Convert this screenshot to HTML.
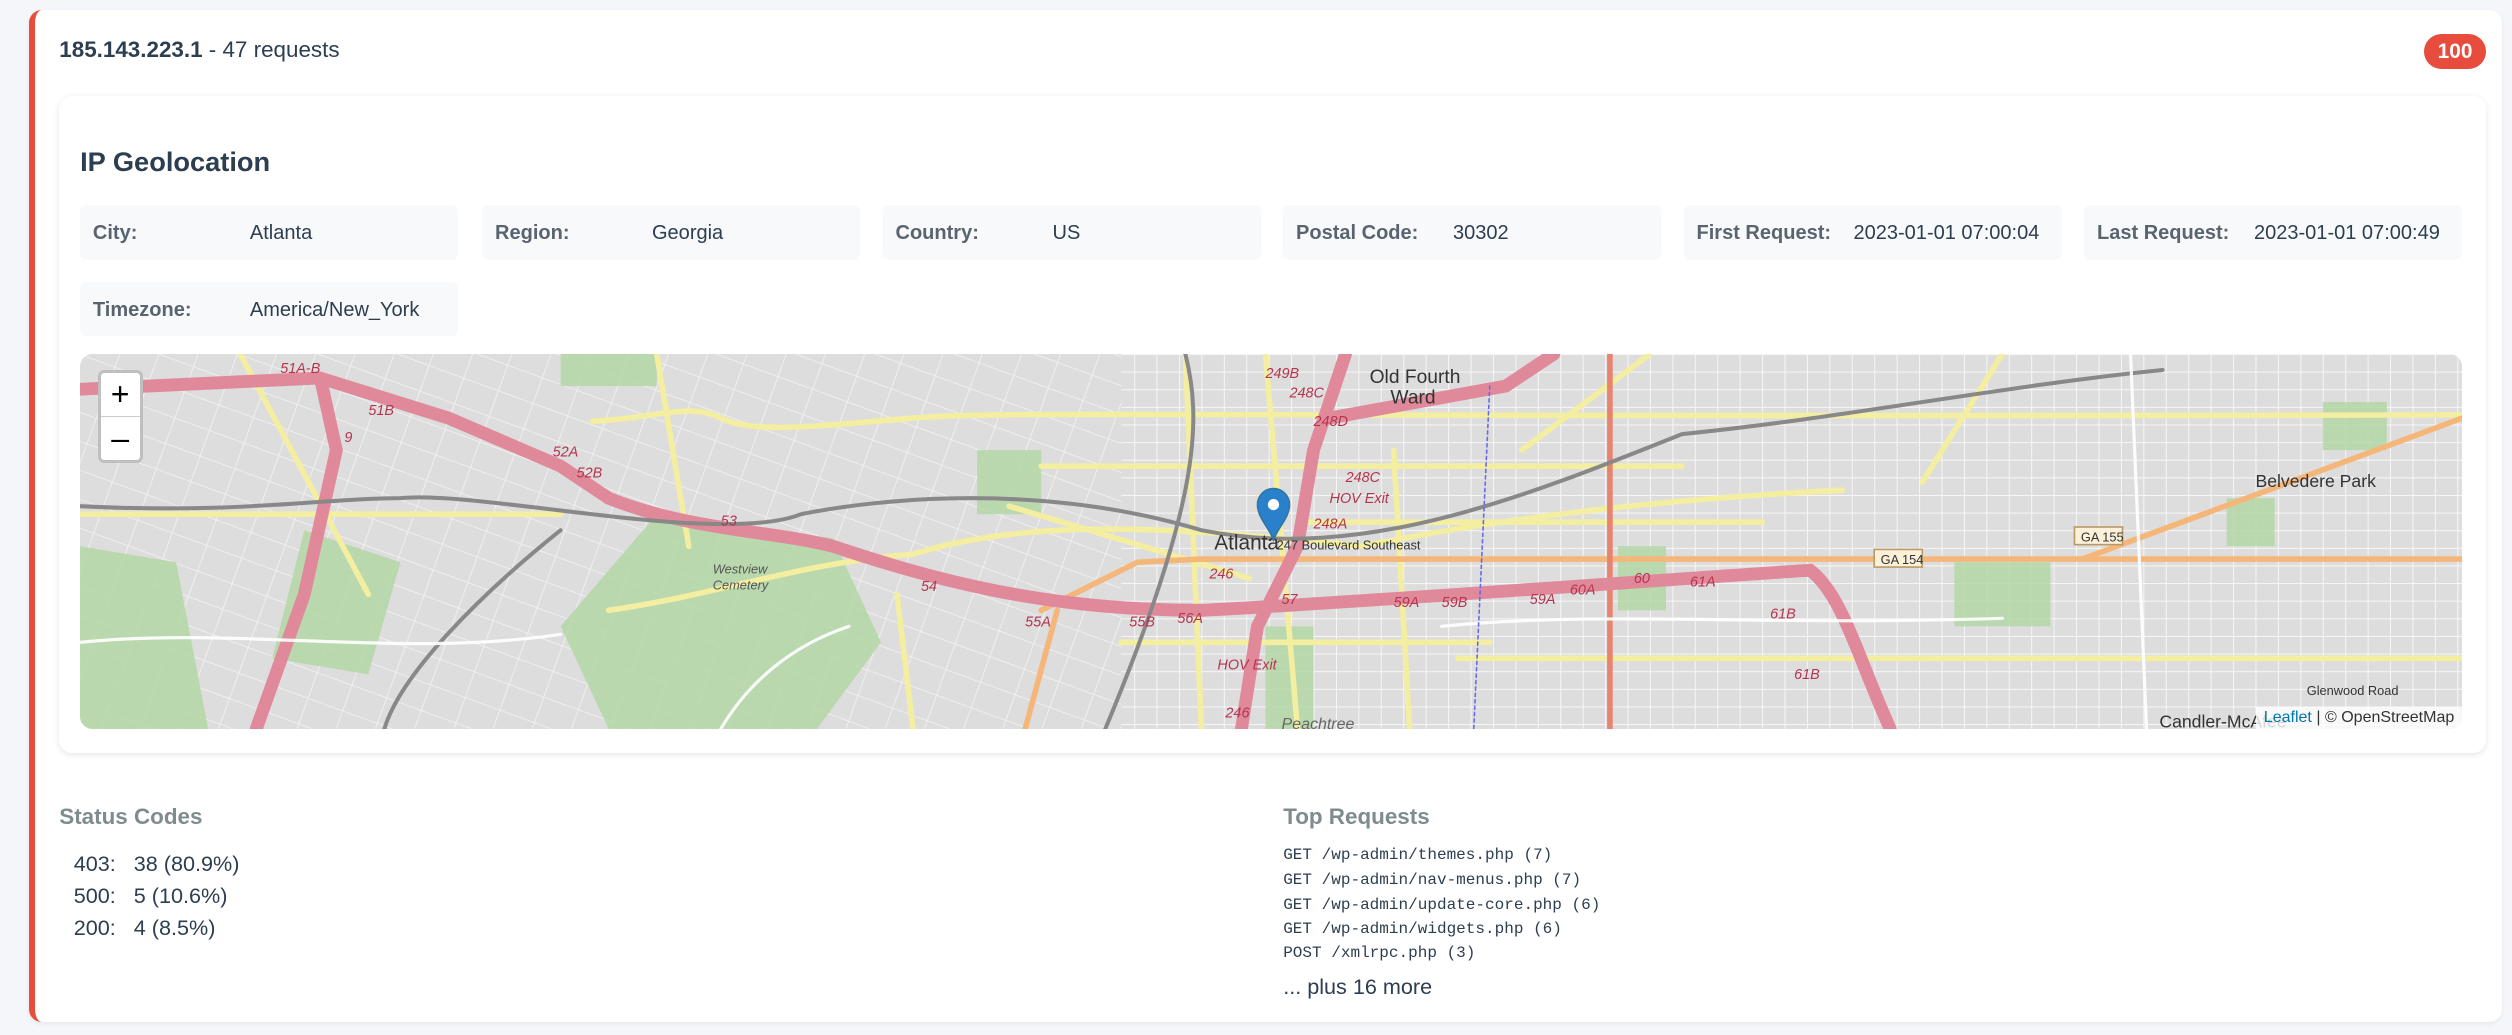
<!DOCTYPE html>
<html><head><meta charset="utf-8"><style>
html,body{margin:0;padding:0;background:#f5f6fa;}
body{width:1568px;height:646px;zoom:1.602;font-family:"Liberation Sans",sans-serif;color:#2c3e50;position:relative;overflow:hidden}
.card{position:absolute;left:18px;top:6px;width:1540px;height:632px;background:#fff;border-left:4px solid #e74c3c;border-radius:8px;box-shadow:0 1px 3px rgba(0,0,0,.06)}
.hdr{position:absolute;left:37px;top:23px;font-size:14px}
.hdr b{font-weight:bold}
.badge{position:absolute;left:1513px;top:21px;width:39px;height:22px;border-radius:11px;background:#e74c3c;color:#fff;font-weight:bold;font-size:13px;text-align:center;line-height:22px}
.geo{position:absolute;left:37px;top:60px;width:1515px;height:410px;background:#fff;border-radius:8px;box-shadow:0 1px 4px rgba(0,0,0,.1)}
.title{position:absolute;left:50px;top:91px;font-size:17px;font-weight:bold}
.box{position:absolute;width:236px;height:34px;background:#f8f9fa;border-radius:4px;font-size:12.5px;line-height:35px}
.box span{position:absolute;left:8px;font-weight:bold;color:#5a6470}
.box i{position:absolute;left:106px;font-style:normal;color:#2c3e50}
.map{position:absolute;left:50px;top:221px;width:1487px;height:234px;border-radius:8px;overflow:hidden;background:#dcdcdc}
.zc{position:absolute;left:11px;top:10px;width:28px;height:58px;background:#fff;border:2px solid rgba(0,0,0,.25);border-radius:4px;box-sizing:border-box}
.zc div{height:27px;text-align:center;font-size:20px;line-height:27px;color:#000}
.zc div:first-child{border-bottom:1px solid #ccc}
.attr{position:absolute;right:0;bottom:0;background:rgba(255,255,255,.8);font-size:10px;padding:1px 5px;color:#333}
.attr a{color:#0078a8}
.h3{position:absolute;font-size:14px;font-weight:bold;color:#7f8c8d}
.sc{position:absolute;left:46px;font-size:13.5px}
.tr{position:absolute;left:801px;font-family:"Liberation Mono",monospace;font-size:10px;color:#2c3e50}
</style></head><body>
<div class="card"></div>
<div class="hdr"><b>185.143.223.1</b> - 47 requests</div>
<div class="badge">100</div>
<div class="geo"></div>
<div class="title">IP Geolocation</div>
<div class="box" style="left:50px;top:128px"><span>City:</span><i>Atlanta</i></div>
<div class="box" style="left:301px;top:128px"><span>Region:</span><i>Georgia</i></div>
<div class="box" style="left:551px;top:128px"><span>Country:</span><i>US</i></div>
<div class="box" style="left:801px;top:128px"><span>Postal Code:</span><i>30302</i></div>
<div class="box" style="left:1051px;top:128px"><span>First Request:</span><i>2023-01-01 07:00:04</i></div>
<div class="box" style="left:1301px;top:128px"><span>Last Request:</span><i>2023-01-01 07:00:49</i></div>
<div class="box" style="left:50px;top:176px"><span>Timezone:</span><i>America/New_York</i></div>
<div class="map">
<svg width="1487" height="234" viewBox="0 0 1487 234" xmlns="http://www.w3.org/2000/svg">
<defs><pattern id="g" width="14" height="11" patternUnits="userSpaceOnUse"><path d="M0 0H14M0 0V11" stroke="#f7f7f7" stroke-width="1.2" fill="none"/></pattern>
<pattern id="g2" width="23" height="17" patternUnits="userSpaceOnUse" patternTransform="rotate(20)"><path d="M0 0H23M0 0V17" stroke="#f4f4f4" stroke-width="1" fill="none"/></pattern></defs>
<rect width="1487" height="234" fill="#dedddd"/>
<rect x="0" y="0" width="650" height="234" fill="url(#g2)"/>
<rect x="650" y="0" width="837" height="234" fill="url(#g)"/>
<g fill="#b4d7a6" opacity=".85">
<path d="M360 100L470 115 500 180 460 234 330 234 300 170Z"/><path d="M0 120L60 130 80 234 0 234Z"/><path d="M140 110L200 130 180 200 120 190Z"/>
<rect x="300" y="0" width="60" height="20"/><rect x="1170" y="130" width="60" height="40"/><rect x="740" y="170" width="30" height="64"/><rect x="560" y="60" width="40" height="40"/>
<rect x="1340" y="90" width="30" height="30"/><rect x="960" y="120" width="30" height="40"/><rect x="1400" y="30" width="40" height="30"/>
</g>
<g fill="none" stroke-linecap="round">
<g stroke="#f3eea0" stroke-width="3.5">
<path d="M320 42C360 40 380 30 400 40S460 45 520 40 700 40 1487 38"/><path d="M330 160C400 150 450 130 520 125 600 100 700 110 800 120 900 100 1000 90 1100 85"/>
<path d="M100 0L180 150"/><path d="M360 0L380 120"/><path d="M690 0L700 234"/><path d="M740 0L760 234"/><path d="M820 60L830 234"/><path d="M510 150L520 234"/>
<path d="M0 100H300"/><path d="M600 70H1000"/><path d="M760 105H1050"/><path d="M860 190H1487"/><path d="M650 180H880"/><path d="M580 95L730 140"/><path d="M980 0L900 60"/><path d="M1200 0L1150 80"/>
</g>
<g stroke="#f5b67a" stroke-width="3.5"><path d="M700 128H1487"/><path d="M1250 128L1487 40"/><path d="M600 160L660 130 700 128"/><path d="M590 234L610 160"/></g>
<path d="M955 0V234" stroke="#e8846e" stroke-width="3.5"/>
<g stroke="#e0899a" stroke-width="8">
<path d="M0 22L150 15 230 40 300 70 330 90"/><path d="M150 15L160 60 140 150 110 234"/>
<path d="M330 90C380 110 430 110 470 120 530 140 600 160 700 160 800 155 1000 140 1080 135 1100 150 1110 190 1130 234"/>
<path d="M790 0L770 60 760 120 735 170 725 234"/><path d="M780 40L890 20 920 0"/>
</g>
<g stroke="#888" stroke-width="2.5"><path d="M0 95C100 100 150 90 200 90 250 85 400 120 450 100 500 90 600 80 700 110 800 130 900 90 1000 50 1100 40 1200 20 1300 10 1400 20 1487 15"/><path d="M690 0C700 40 700 90 640 234"/><path d="M300 110C250 150 200 200 190 234"/></g>
<g stroke="#fff" stroke-width="2" opacity=".9"><path d="M0 180C100 170 200 190 300 175"/><path d="M850 170C950 160 1050 170 1200 165"/><path d="M1280 0L1290 234"/><path d="M400 234C420 200 450 180 480 170"/></g>
<path d="M880 20L870 234" stroke="#6a6ae8" stroke-width="1" stroke-dasharray="2 2"/>
</g>
<g font-family="Liberation Sans,sans-serif" font-size="9" fill="#b5344f" font-style="italic">
<text x="125" y="12">51A-B</text><text x="180" y="38">51B</text><text x="295" y="64">52A</text><text x="310" y="77">52B</text><text x="400" y="107">53</text><text x="525" y="148">54</text><text x="590" y="170">55A</text><text x="655" y="170">55B</text><text x="685" y="168">56A</text><text x="750" y="156">57</text><text x="820" y="158">59A</text><text x="850" y="158">59B</text><text x="905" y="156">59A</text><text x="930" y="150">60A</text><text x="970" y="143">60</text><text x="1005" y="145">61A</text><text x="1055" y="165">61B</text><text x="1070" y="203">61B</text><text x="740" y="15">249B</text><text x="755" y="27">248C</text><text x="770" y="45">248D</text><text x="790" y="80">248C</text><text x="780" y="93">HOV Exit</text><text x="770" y="109">248A</text><text x="705" y="140">246</text><text x="710" y="197">HOV Exit</text><text x="715" y="227">246</text><text x="165" y="55">9</text>
</g>
<g font-family="Liberation Sans,sans-serif" fill="#333">
<text x="805" y="18" font-size="12">Old Fourth</text><text x="818" y="31" font-size="12">Ward</text>
<text x="708" y="122" font-size="13">Atlanta</text><text x="747" y="122" font-size="8">247 Boulevard Southeast</text>
<text x="395" y="137" font-size="8" fill="#555" font-style="italic">Westview</text><text x="395" y="147" font-size="8" fill="#555" font-style="italic">Cemetery</text>
<text x="1358" y="83" font-size="11">Belvedere Park</text><text x="750" y="234" font-size="10" fill="#666" font-style="italic">Peachtree</text>
<text x="1298" y="233" font-size="11">Candler-McAfee</text><text x="1390" y="213" font-size="8">Glenwood Road</text>
</g>
<g font-family="Liberation Sans,sans-serif" font-size="8" fill="#333"><rect x="1120" y="122" width="30" height="11" fill="#fcf0d8" stroke="#b89a66"/><text x="1124" y="131">GA 154</text><rect x="1245" y="108" width="30" height="11" fill="#fcf0d8" stroke="#b89a66"/><text x="1249" y="117">GA 155</text></g>
<path d="M745 116C742 108 735 102 735 94A10 10 0 0 1 755 94C755 102 748 108 745 116Z" fill="#2a81cb" stroke="#3274a3"/>
<circle cx="745" cy="94" r="3.5" fill="#fff"/>
</svg>
<div class="zc"><div>+</div><div>–</div></div>
<div class="attr"><a>Leaflet</a> | © OpenStreetMap</div>
</div>
<div class="h3" style="left:37px;top:502px">Status Codes</div>
<div class="sc" style="top:531px">403:&nbsp;&nbsp; 38 (80.9%)</div>
<div class="sc" style="top:551px">500:&nbsp;&nbsp; 5 (10.6%)</div>
<div class="sc" style="top:571px">200:&nbsp;&nbsp; 4 (8.5%)</div>
<div class="h3" style="left:801px;top:502px">Top Requests</div>
<div class="tr" style="top:528px">GET /wp-admin/themes.php (7)</div>
<div class="tr" style="top:544px">GET /wp-admin/nav-menus.php (7)</div>
<div class="tr" style="top:559px">GET /wp-admin/update-core.php (6)</div>
<div class="tr" style="top:574px">GET /wp-admin/widgets.php (6)</div>
<div class="tr" style="top:589px">POST /xmlrpc.php (3)</div>
<div class="sc" style="left:801px;top:608px">... plus 16 more</div>
</body></html>
